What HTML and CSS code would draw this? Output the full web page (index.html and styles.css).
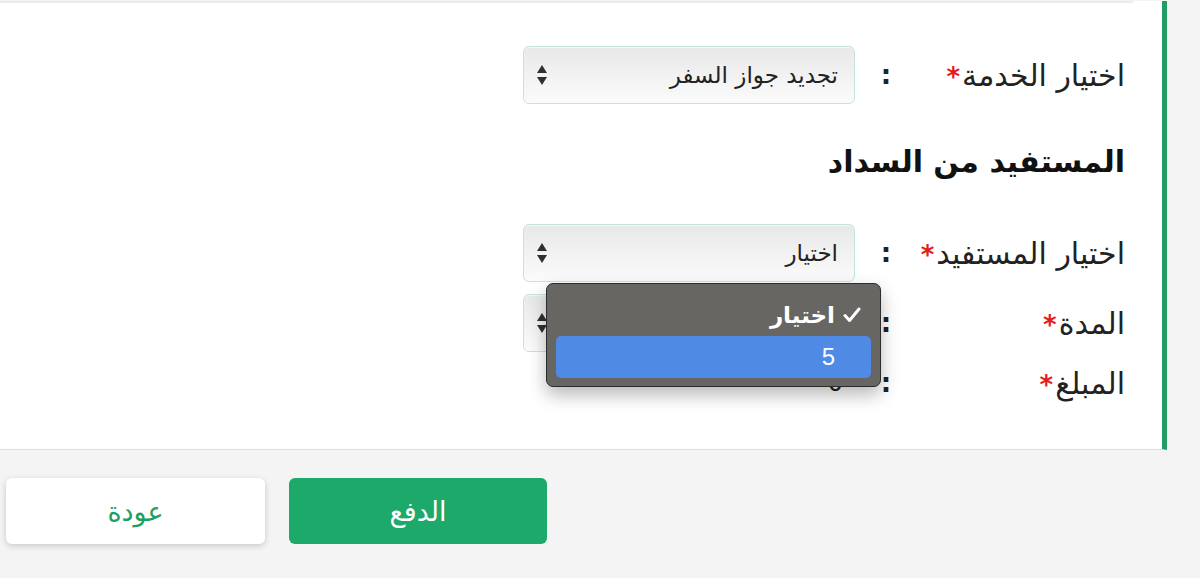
FILE: index.html
```html
<!DOCTYPE html>
<html lang="ar" dir="rtl">
<head>
<meta charset="utf-8">
<link rel="stylesheet" href="styles.css">
</head>
<body>
<div class="page">
  <section class="card">
    <div class="divider"></div>
    <div class="form">
      <div class="row row-first">
        <div class="label">اختيار الخدمة<span class="req">*</span></div>
        <div class="colon">:</div>
        <div class="select">
          <span class="select-text">تجديد جواز السفر</span>
          <svg class="arrows" width="12" height="22" viewBox="0 0 12 22"><path d="M6 1 L11 9 H1 Z M1 13 H11 L6 21 Z" fill="#2f2f2f"/></svg>
        </div>
      </div>

      <h2 class="heading">المستفيد من السداد</h2>

      <div class="row row-second">
        <div class="label">اختيار المستفيد<span class="req">*</span></div>
        <div class="colon">:</div>
        <div class="select-wrap">
          <div class="select">
            <span class="select-text">اختيار</span>
            <svg class="arrows" width="12" height="22" viewBox="0 0 12 22"><path d="M6 1 L11 9 H1 Z M1 13 H11 L6 21 Z" fill="#2f2f2f"/></svg>
          </div>
          <div class="popup">
            <div class="opt">
              <span class="check"><svg width="18" height="16" viewBox="0 0 18 16"><path d="M2 8.5 L6.5 13.5 L16 2" fill="none" stroke="#fff" stroke-width="3" stroke-linecap="round" stroke-linejoin="round"/></svg></span>
              <span class="opt-text">اختيار</span>
            </div>
            <div class="opt opt-active"><span class="check"></span><span class="opt-text num">5</span></div>
          </div>
        </div>
      </div>

      <div class="row row-third">
        <div class="label">المدة<span class="req">*</span></div>
        <div class="colon">:</div>
        <div class="select">
          <span class="select-text"></span>
          <svg class="arrows" width="12" height="22" viewBox="0 0 12 22"><path d="M6 1 L11 9 H1 Z M1 13 H11 L6 21 Z" fill="#2f2f2f"/></svg>
        </div>
      </div>

      <div class="row row-fourth">
        <div class="label">المبلغ<span class="req">*</span></div>
        <div class="colon">:</div>
        <div class="value">0</div>
      </div>
    </div>
  </section>

  <footer class="actions">
    <button class="btn btn-pay">الدفع</button>
    <button class="btn btn-back">عودة</button>
  </footer>
</div>
</body>
</html>
```

FILE: styles.css
```css
* { box-sizing: border-box; }

html, body {
  margin: 0;
  padding: 0;
}

body {
  background: #f4f4f4;
  font-family: "DejaVu Sans", "Noto Sans", sans-serif;
  color: #222;
  width: 1200px;
  height: 578px;
  overflow: hidden;
}

.page {
  width: 1200px;
}

.card {
  width: 1167px;
  height: 449px;
  margin-right: 33px;
  background: #fff;
  border-right: 5px solid #219e64;
  border-bottom: 1px solid #dedede;
}

.divider {
  height: 2px;
  margin-top: 1px;
  margin-right: 29px;
  background: #ececec;
}

.form {
  padding-right: 37px;
}

.row {
  display: grid;
  grid-template-columns: 332px 17px 28px 225px;
  direction: ltr;
  align-items: center;
  justify-content: end;
  height: 58px;
}

.row > * { grid-row: 1; }
.row > .label { grid-column: 4; }
.row > .colon { grid-column: 3; }
.row > .select,
.row > .select-wrap,
.row > .value { grid-column: 1; }

.label {
  direction: rtl;
  text-align: right;
  font-size: 30px;
  color: #222;
  white-space: nowrap;
}

.req {
  color: #e41c1c;
  font-weight: bold;
  font-size: 26px;
  margin-right: 2px;
}

.colon {
  text-align: center;
  font-size: 26px;
  font-weight: bold;
  color: #222;
}

.row-first { margin-top: 43px; }
.row-second { margin-top: 44px; }
.row-third { margin-top: 12px; }
.row-fourth { margin-top: 6px; height: 50px; }

.heading {
  direction: rtl;
  margin: 40px 0 0 0;
  height: 36px;
  line-height: 36px;
  font-size: 30px;
  font-weight: bold;
  text-align: right;
  color: #111;
}

.select-wrap {
  position: relative;
}

.select {
  height: 58px;
  width: 332px;
  border: 1.5px solid #c3e6d8;
  border-radius: 6px;
  background: linear-gradient(#e8e8e8, #fbfbfb);
  box-shadow: inset 0 1px 1px rgba(255,255,255,0.6);
  display: flex;
  align-items: center;
  justify-content: space-between;
  direction: rtl;
  padding: 0 16px 0 12px;
}

.select-text {
  font-size: 23px;
  color: #222;
}

.arrows {
  display: block;
}

.value {
  direction: rtl;
  text-align: right;
  padding-right: 12px;
  font-size: 24px;
  color: #222;
}

.popup {
  position: absolute;
  top: 59px;
  left: 23px;
  width: 335px;
  background: #686663;
  border: 1px solid #2c2c2c;
  border-radius: 7px;
  box-shadow: 0 8px 18px rgba(0,0,0,0.28);
  padding: 10px 9px 8px 9px;
  direction: rtl;
  z-index: 10;
}

.opt {
  height: 42px;
  display: flex;
  align-items: center;
  padding-right: 8px;
  border-radius: 5px;
  color: #fff;
}

.opt-active {
  background: #4f8ae4;
}

.check {
  width: 22px;
  display: flex;
  justify-content: center;
  margin-left: 6px;
}

.opt-text {
  font-size: 23px;
  font-weight: bold;
}

.num {
  font-family: "Liberation Sans", "DejaVu Sans", sans-serif;
  font-weight: normal;
  font-size: 24px;
}

.actions {
  display: flex;
  justify-content: flex-end;
  gap: 24px;
  padding: 28px 0 0 6px;
  direction: rtl;
}

.btn {
  width: 258px;
  height: 66px;
  border-radius: 6px;
  font-family: "DejaVu Sans", sans-serif;
  font-size: 27px;
  border: none;
  cursor: pointer;
}

.btn-pay {
  background: #1ca96a;
  color: #fff;
}

.btn-back {
  width: 259px;
  background: #fff;
  color: #1f9f5f;
  box-shadow: 0 2px 6px rgba(0,0,0,0.18);
}
```
